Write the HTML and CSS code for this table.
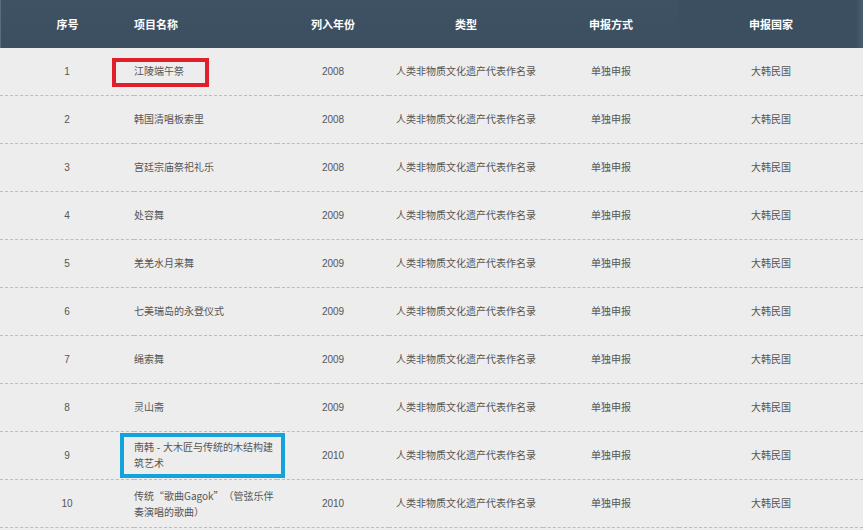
FILE: index.html
```html
<!DOCTYPE html>
<html lang="zh-CN">
<head>
<meta charset="utf-8">
<title>韩国人类非物质文化遗产名录</title>
<link rel="stylesheet" href="styles.css">
</head>
<body>
<table class="heritage">
  <colgroup>
    <col class="c-no">
    <col class="c-name">
    <col class="c-year">
    <col class="c-type">
    <col class="c-way">
    <col class="c-country">
  </colgroup>
  <thead>
    <tr>
      <th>序号</th>
      <th class="left">项目名称</th>
      <th>列入年份</th>
      <th>类型</th>
      <th>申报方式</th>
      <th>申报国家</th>
    </tr>
  </thead>
  <tbody>
    <tr><td>1</td><td class="left mark"><span class="box box-red"></span>江陵端午祭</td><td>2008</td><td>人类非物质文化遗产代表作名录</td><td>单独申报</td><td>大韩民国</td></tr>
    <tr><td>2</td><td class="left">韩国清唱板索里</td><td>2008</td><td>人类非物质文化遗产代表作名录</td><td>单独申报</td><td>大韩民国</td></tr>
    <tr><td>3</td><td class="left">宫廷宗庙祭祀礼乐</td><td>2008</td><td>人类非物质文化遗产代表作名录</td><td>单独申报</td><td>大韩民国</td></tr>
    <tr><td>4</td><td class="left">处容舞</td><td>2009</td><td>人类非物质文化遗产代表作名录</td><td>单独申报</td><td>大韩民国</td></tr>
    <tr><td>5</td><td class="left">羌羌水月来舞</td><td>2009</td><td>人类非物质文化遗产代表作名录</td><td>单独申报</td><td>大韩民国</td></tr>
    <tr><td>6</td><td class="left">七美瑞岛的永登仪式</td><td>2009</td><td>人类非物质文化遗产代表作名录</td><td>单独申报</td><td>大韩民国</td></tr>
    <tr><td>7</td><td class="left">绳索舞</td><td>2009</td><td>人类非物质文化遗产代表作名录</td><td>单独申报</td><td>大韩民国</td></tr>
    <tr><td>8</td><td class="left">灵山斋</td><td>2009</td><td>人类非物质文化遗产代表作名录</td><td>单独申报</td><td>大韩民国</td></tr>
    <tr><td>9</td><td class="left mark"><span class="box box-blue"></span>南韩 - 大木匠与传统的木结构建筑艺术</td><td>2010</td><td>人类非物质文化遗产代表作名录</td><td>单独申报</td><td>大韩民国</td></tr>
    <tr><td>10</td><td class="left cjk">传统“歌曲Gagok”（管弦乐伴奏演唱的歌曲）</td><td>2010</td><td>人类非物质文化遗产代表作名录</td><td>单独申报</td><td>大韩民国</td></tr>
  </tbody>
</table>
</body>
</html>
```

FILE: styles.css
```css
html, body {
  margin: 0;
  padding: 0;
  background: #ededed;
}

body {
  font-family: "Liberation Sans", "Noto Sans CJK SC", sans-serif;
  color: #555;
}

.heritage {
  width: 863px;
  border-collapse: separate;
  border-spacing: 0;
  table-layout: fixed;
}

.c-no { width: 134px; }
.c-name { width: 143px; }
.c-year { width: 112px; }
.c-type { width: 154px; }
.c-way { width: 136px; }
.c-country { width: 184px; }

.heritage thead tr {
  height: 48px;
}

.heritage th {
  background: linear-gradient(to bottom, #3f5264, #3c4f60);
  color: #fff;
  font-size: 11px;
  font-weight: bold;
  text-align: center;
  vertical-align: middle;
  padding: 0;
}

.heritage th:first-child {
  border-left: 1px solid #5a6d7e;
}

.heritage th:last-child {
  background: linear-gradient(to right, #3c4f60 96%, #4b5e70);
}

.heritage tbody tr {
  height: 48px;
}

.heritage td {
  font-size: 10px;
  line-height: 16px;
  text-align: center;
  vertical-align: middle;
  padding: 0;
  border-bottom: 1px dashed #bdbdbd;
  color: #555;
}

.heritage .left {
  text-align: left;
}

.heritage .cjk {
  font-family: "Noto Sans CJK SC", sans-serif;
  text-spacing-trim: space-all;
}

.mark {
  position: relative;
}

.box {
  position: absolute;
  box-sizing: border-box;
  border-width: 4px;
  border-style: solid;
  pointer-events: none;
}

.box-red {
  left: -22px;
  top: 10px;
  width: 97px;
  height: 29px;
  border-color: #e01f2b;
}

.box-blue {
  left: -14px;
  top: 1px;
  width: 165px;
  height: 45px;
  border-color: #12a3dd;
}
```
